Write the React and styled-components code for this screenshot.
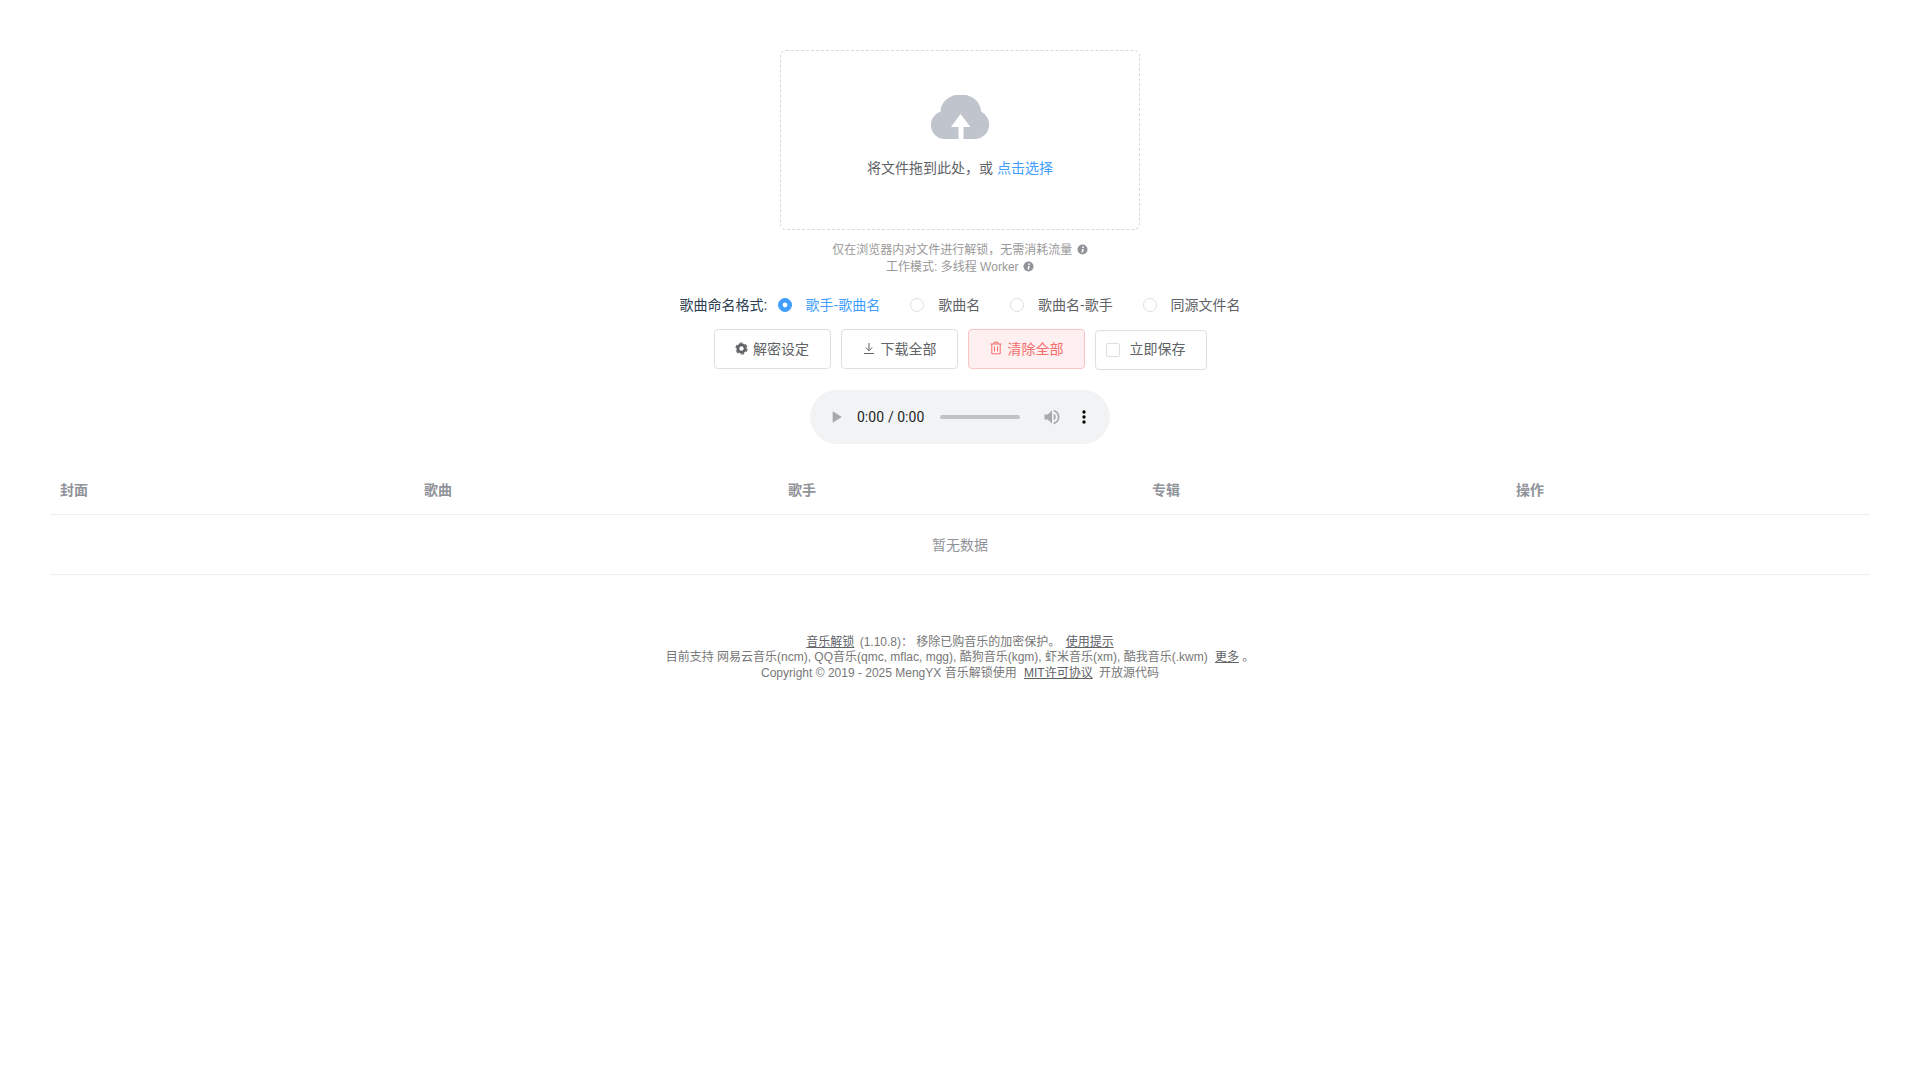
import React from 'react';
import styled, { createGlobalStyle } from 'styled-components';

const Global = createGlobalStyle`
  html, body { margin: 0; padding: 0; background: #fff; }
  body { font-family: "Liberation Sans", "Noto Sans CJK SC", sans-serif; color: #2c3e50; }
`;

const Page = styled.div`
  padding: 50px 50px 0;
  text-align: center;
`;
const Dragger = styled.div`
  box-sizing: border-box;
  width: 360px;
  height: 180px;
  margin: 0 auto;
  border: 1px dashed #d9d9d9;
  border-radius: 6px;
  background: #fff;
  display: flex;
  flex-direction: column;
  align-items: center;
`;
const CloudIcon = styled.svg`
  width: 60px;
  height: 44px;
  margin: 44px 0 0 2px;
  display: block;
`;
const DropText = styled.div`
  margin-top: 18px;
  font-size: 14px;
  line-height: 22px;
  color: #606266;
  em { color: #409eff; font-style: normal; }
`;
const Tips = styled.div`
  margin-top: 12px;
  font-size: 12px;
  line-height: 17px;
  color: #999;
`;
const InfoDot = styled.svg`
  width: 11px;
  height: 11px;
  vertical-align: -1px;
  margin-left: 1px;
`;
const NameRow = styled.div`
  margin-top: 19px;
  height: 20px;
  line-height: 20px;
  font-size: 14px;
  white-space: nowrap;
`;
const NameLabel = styled.span`
  color: #2c3e50;
  margin-right: 10.4px;
`;
const Radio = styled.span`
  display: inline-block;
  margin-right: 30px;
  color: ${p => (p.$on ? '#409eff' : '#606266')};
  &:last-child { margin-right: 0; }
`;
const RadioDot = styled.span`
  display: inline-block;
  box-sizing: border-box;
  width: 14px;
  height: 14px;
  border-radius: 50%;
  border: 1px solid ${p => (p.$on ? '#409eff' : '#dcdfe6')};
  background: ${p => (p.$on ? '#409eff' : '#fff')};
  margin-right: 13.9px;
  vertical-align: -2px;
  position: relative;
  ${p => p.$on && `&::after { content: ""; position: absolute; left: 3px; top: 3px; width: 6px; height: 6px; border-radius: 50%; background: #fff; transform: scale(.8); }`}
`;
const Actions = styled.div`
  margin-top: 14px;
  display: flex;
  justify-content: center;
  align-items: flex-start;
  gap: 10px;
`;
const Btn = styled.button`
  box-sizing: border-box;
  height: 40px;
  width: 117px;
  padding: 0 0 2px;
  border-radius: 4px;
  font: inherit;
  font-size: 14px;
  border: 1px solid ${p => (p.$danger ? '#fbc4c4' : '#dcdfe6')};
  background: ${p => (p.$danger ? '#fef0f0' : '#fff')};
  color: ${p => (p.$danger ? '#f56c6c' : '#606266')};
  display: flex;
  align-items: center;
  justify-content: center;
  gap: 5px;
`;
const CheckBox = styled.label`
  box-sizing: border-box;
  height: 40px;
  width: 112px;
  margin-top: 1px;
  padding: 0 0 4px 10px;
  border-radius: 4px;
  border: 1px solid #dcdfe6;
  font-size: 14px;
  color: #606266;
  display: flex;
  align-items: center;
  gap: 10px;
  i { box-sizing: border-box; width: 14px; height: 14px; border: 1px solid #dcdfe6; border-radius: 2px; background: #fff; margin-top: 4px; }
`;
const Player = styled.audio`
  display: block;
  width: 300px;
  height: 54px;
  margin: 20px auto 0;
`;
const SongTable = styled.table`
  width: 100%;
  margin-top: 23px;
  border-collapse: collapse;
  table-layout: fixed;
  font-size: 14px;
  text-align: left;
  th {
    height: 47px;
    padding: 0 10px 2px;
    box-sizing: border-box;
    color: #909399;
    font-weight: 700;
    border-bottom: 1px solid #ebeef5;
  }
  td {
    height: 60px;
    padding: 0;
    box-sizing: border-box;
    text-align: center;
    color: #909399;
    border-bottom: 1px solid #ebeef5;
  }
`;
const Footer = styled.div`
  margin-top: 60.3px;
  font-size: 12px;
  line-height: 15.6px;
  color: #777;
`;
const FootLink = styled.a`
  color: #606266;
  text-decoration: underline;
  margin: ${p => p.$margin || '0 2px'};
`;

const Info = () => (
  <InfoDot viewBox="0 0 11 11">
    <circle cx="5.5" cy="5.5" r="5" fill="#909399" />
    <rect x="5" y="5" width="1.6" height="3.4" fill="#fff" transform="skewX(-10) translate(1 0)" />
    <circle cx="6" cy="3.2" r="0.9" fill="#fff" />
  </InfoDot>
);

const Gear = () => (
  <svg width="13" height="13" viewBox="0 0 13 13">
    <circle cx="6.5" cy="6.5" r="3.6" fill="none" stroke="#606266" strokeWidth="2.8" />
    <circle cx="6.5" cy="6.5" r="5.5" fill="none" stroke="#606266" strokeWidth="1.2" strokeDasharray="3.4 2.36" />
  </svg>
);
const Download = () => (
  <svg width="14" height="14" viewBox="0 0 14 14" fill="none" stroke="#606266" strokeWidth="1">
    <path d="M7 2v7.5M3.8 6.5 7 9.7l3.2-3.2M2 12.5h10" />
  </svg>
);
const Trash = () => (
  <svg width="14" height="14" viewBox="0 0 14 14" fill="none" stroke="#f56c6c" strokeWidth="1">
    <path d="M1.5 3h11M5 3V1.2h4V3M2.8 3v9.8h8.4V3M5.5 5.5v5M8.5 5.5v5" />
  </svg>
);

export default function App() {
  return (
    <Page>
      <Global />
      <Dragger>
        <CloudIcon viewBox="0 0 60 44">
          <path fill="#c0c4cc" d="M14 44A14 14 0 0 1 9.5 16.7 20 17 0 0 1 50 16.5 14.5 14.5 0 0 1 45 44Z" />
          <path fill="#fff" d="M29.5 19 39.5 32H32.5V44H27.5V32H20Z" />
        </CloudIcon>
        <DropText>将文件拖到此处，或 <em>点击选择</em></DropText>
      </Dragger>
      <Tips>
        <div>仅在浏览器内对文件进行解锁，无需消耗流量 <Info /></div>
        <div>工作模式: 多线程 Worker <Info /></div>
      </Tips>
      <NameRow>
        <NameLabel>歌曲命名格式:</NameLabel>
        <Radio $on><RadioDot $on />歌手-歌曲名</Radio>
        <Radio><RadioDot />歌曲名</Radio>
        <Radio><RadioDot />歌曲名-歌手</Radio>
        <Radio><RadioDot />同源文件名</Radio>
      </NameRow>
      <Actions>
        <Btn><Gear />解密设定</Btn>
        <Btn><Download />下载全部</Btn>
        <Btn $danger><Trash />清除全部</Btn>
        <CheckBox><i />立即保存</CheckBox>
      </Actions>
      <Player controls />
      <SongTable>
        <thead>
          <tr><th>封面</th><th>歌曲</th><th>歌手</th><th>专辑</th><th>操作</th></tr>
        </thead>
        <tbody>
          <tr><td colSpan="5">暂无数据</td></tr>
        </tbody>
      </SongTable>
      <Footer>
        <div><FootLink>音乐解锁</FootLink> (1.10.8)： 移除已购音乐的加密保护。 <FootLink>使用提示</FootLink></div>
        <div>目前支持 网易云音乐(ncm), QQ音乐(qmc, mflac, mgg), 酷狗音乐(kgm), 虾米音乐(xm), 酷我音乐(.kwm) <FootLink $margin="0 0 0 4px">更多</FootLink> 。</div>
        <div>Copyright © 2019 - 2025 MengYX 音乐解锁使用 <FootLink $margin="0 3px 0 4px">MIT许可协议</FootLink> 开放源代码</div>
      </Footer>
    </Page>
  );
}
